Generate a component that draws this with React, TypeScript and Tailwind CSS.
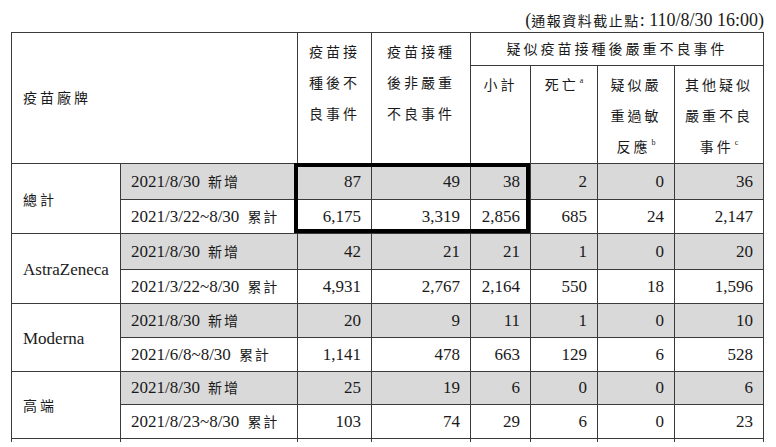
import React from "react";

type Line = { label: string; tag: string; v: string[]; h: string };
type Group = { brand: string; cjk: boolean; lines: Line[] };

const groups: Group[] = [
  {
    brand: "總計",
    cjk: true,
    lines: [
      { label: "2021/8/30", tag: "新增", v: ["87", "49", "38", "2", "0", "36"], h: "h-[36px]" },
      { label: "2021/3/22~8/30", tag: "累計", v: ["6,175", "3,319", "2,856", "685", "24", "2,147"], h: "h-[34px]" },
    ],
  },
  {
    brand: "AstraZeneca",
    cjk: false,
    lines: [
      { label: "2021/8/30", tag: "新增", v: ["42", "21", "21", "1", "0", "20"], h: "h-[36px]" },
      { label: "2021/3/22~8/30", tag: "累計", v: ["4,931", "2,767", "2,164", "550", "18", "1,596"], h: "h-[34px]" },
    ],
  },
  {
    brand: "Moderna",
    cjk: false,
    lines: [
      { label: "2021/8/30", tag: "新增", v: ["20", "9", "11", "1", "0", "10"], h: "h-[34px]" },
      { label: "2021/6/8~8/30", tag: "累計", v: ["1,141", "478", "663", "129", "6", "528"], h: "h-[34px]" },
    ],
  },
  {
    brand: "高端",
    cjk: true,
    lines: [
      { label: "2021/8/30", tag: "新增", v: ["25", "19", "6", "0", "0", "6"], h: "h-[33px]" },
      { label: "2021/8/23~8/30", tag: "累計", v: ["103", "74", "29", "6", "0", "23"], h: "h-[34px]" },
    ],
  },
];

const cell = "border border-[#3a3a3a]";
const zh = "text-[14px] tracking-[3px]";
// 表頭儲存格：字級直接放在 th 上，避免行高被撐開
const head = `${cell} p-0 pt-[4px] align-top font-normal text-[14px] tracking-[3px] leading-[31px]`;

function Sup({ c }: { c: string }) {
  return <sup className="text-[8px] leading-none tracking-normal ml-[1px] relative -top-[7px]">{c}</sup>;
}

export default function App() {
  return (
    <div
      className="w-[776px] h-[447px] bg-white text-[#1a1a1a] overflow-hidden"
      style={{ fontFamily: '"Liberation Serif", "Noto Sans CJK TC", serif' }}
    >
      {/* 截止時間 */}
      <div className="h-[32px] flex justify-end items-center pt-[7px] pr-[12px]">
        <span className="text-[18px] leading-none">
          (<span className="text-[14px] tracking-[1.5px]">通報資料截止點</span>: 110/8/30 16:00)
        </span>
      </div>

      <div className="relative ml-[11px] w-[752px]">
        <table className="w-[752px] table-fixed border-collapse">
          <colgroup>
            <col className="w-[109px]" />
            <col className="w-[177px]" />
            <col className="w-[74px]" />
            <col className="w-[99px]" />
            <col className="w-[60px]" />
            <col className="w-[67px]" />
            <col className="w-[77px]" />
            <col className="w-[89px]" />
          </colgroup>
          <thead>
            <tr className="h-[33px]">
              <th
                colSpan={2}
                rowSpan={2}
                className={`${cell} p-0 text-left align-middle pl-[11px] font-normal text-[14px] tracking-[3px]`}
              >
                疫苗廠牌
              </th>
              <th rowSpan={2} className={head}>
                疫苗接<br />種後不<br />良事件
              </th>
              <th rowSpan={2} className={head}>
                疫苗接種<br />後非嚴重<br />不良事件
              </th>
              <th colSpan={4} className={`${cell} p-0 align-middle font-normal text-[14px] tracking-[3px]`}>
                疑似疫苗接種後嚴重不良事件
              </th>
            </tr>
            <tr className="h-[98px]">
              <th className={head}>小計</th>
              <th className={head}>
                死亡<Sup c="a" />
              </th>
              <th className={head}>
                疑似嚴<br />重過敏<br />反應<Sup c="b" />
              </th>
              <th className={head}>
                其他疑似<br />嚴重不良<br />事件<Sup c="c" />
              </th>
            </tr>
          </thead>
          <tbody className="text-[17px]">
            {groups.map((g) =>
              g.lines.map((l, i) => {
                const shade = i === 0 ? "bg-[#d9d9d9]" : "bg-white";
                return (
                  <tr key={g.brand + i} className={l.h}>
                    {i === 0 && (
                      <td rowSpan={2} className={`${cell} p-0 bg-white align-middle pl-[11px] pt-[2px]`}>
                        {g.cjk ? <span className={zh}>{g.brand}</span> : g.brand}
                      </td>
                    )}
                    <td className={`${cell} ${shade} p-0 pl-[10px] whitespace-nowrap`}>
                      {l.label}
                      <span className="text-[14px] tracking-[2px] ml-[8px]">{l.tag}</span>
                    </td>
                    {l.v.map((n, k) => (
                      <td key={k} className={`${cell} ${shade} p-0 text-right pr-[10px]`}>
                        {n}
                      </td>
                    ))}
                  </tr>
                );
              })
            )}
            <tr className="h-[3px]">
              {Array.from({ length: 8 }).map((_, k) => (
                <td key={k} className="border-x border-[#3a3a3a] p-0"></td>
              ))}
            </tr>
          </tbody>
        </table>

        {/* 總計粗框 */}
        <div className="absolute left-[283px] top-[131px] w-[236px] h-[70px] border-4 border-black pointer-events-none" />
      </div>
    </div>
  );
}
